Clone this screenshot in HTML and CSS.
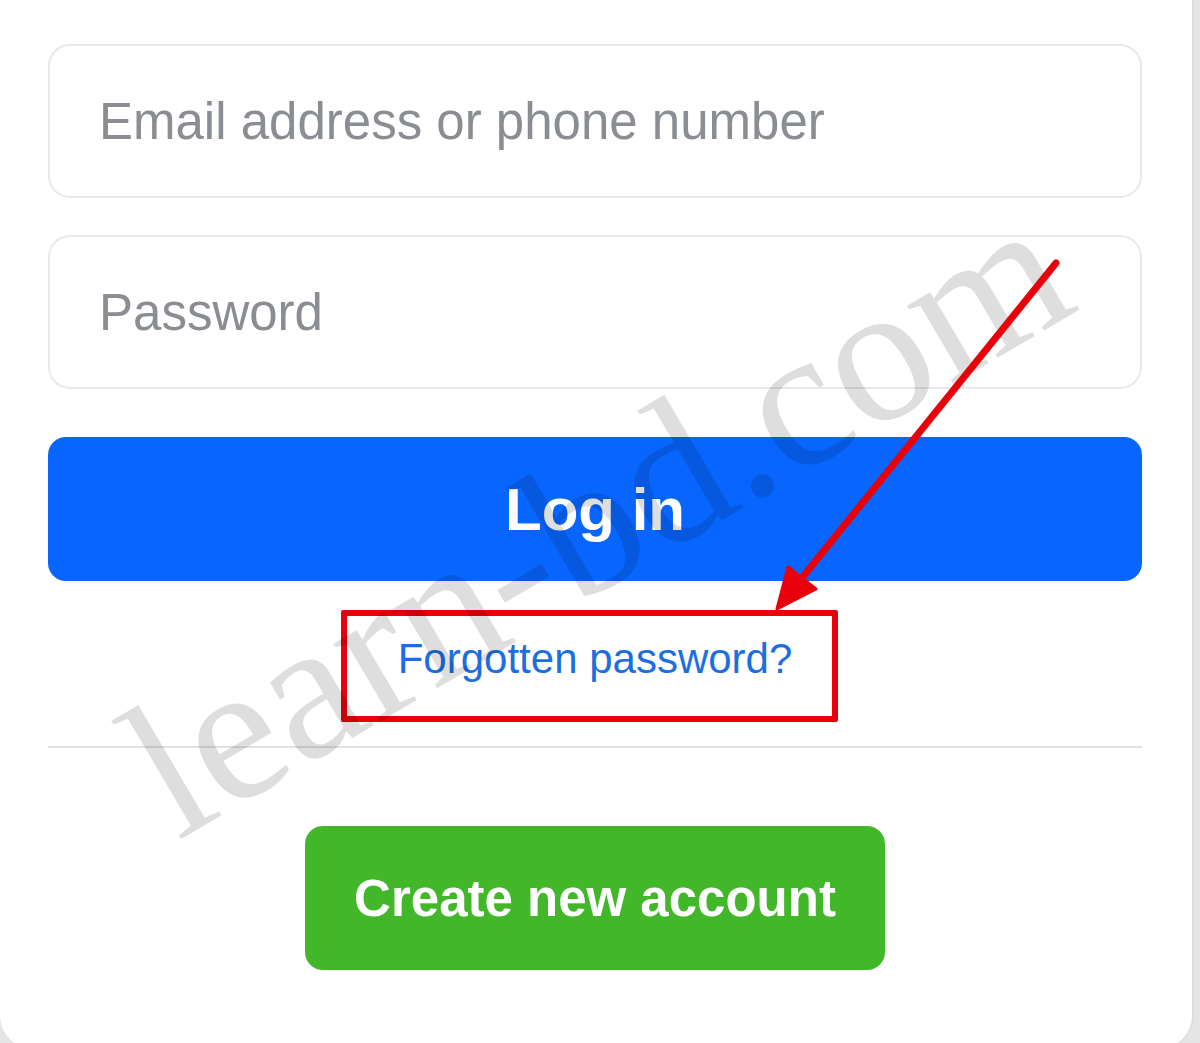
FILE: index.html
```html
<!DOCTYPE html>
<html lang="en">
<head>
<meta charset="utf-8">
<title>Log in</title>
<link rel="stylesheet" href="styles.css">
</head>
<body>
  <main class="card">
    <form class="login-form">
      <input class="field" type="text" placeholder="Email address or phone number">
      <input class="field field-password" type="password" placeholder="Password">
      <button class="btn-login" type="button">Log in</button>
      <div class="forgot-row">
        <span class="highlight-box"><a class="forgot-link" href="#">Forgotten password?</a></span>
      </div>
      <div class="divider"></div>
      <div class="create-row">
        <button class="btn-create" type="button">Create new account</button>
      </div>
    </form>
  </main>

  <div class="watermark">learn-bd.com</div>

  <svg class="annotation" width="1200" height="1043" viewBox="0 0 1200 1043" aria-hidden="true">
    <line x1="1056" y1="263" x2="797" y2="584" stroke="#e8000b" stroke-width="7" stroke-linecap="round"/>
    <polygon points="777,609 788,567 816,589" fill="#e8000b" stroke="#e8000b" stroke-width="3" stroke-linejoin="round"/>
  </svg>
</body>
</html>
```

FILE: styles.css
```css
html, body {
  margin: 0;
  padding: 0;
}

body {
  width: 1200px;
  height: 1043px;
  overflow: hidden;
  background: #e5e5e6;
  font-family: "Liberation Sans", Arial, sans-serif;
  position: relative;
}

.card {
  width: 1192px;
  height: 1088px;
  margin-top: -40px;
  box-sizing: border-box;
  padding: 84px 50px 0 48px;
  background: #ffffff;
  border-radius: 0 0 32px 32px;
  box-shadow: 1px 0 3px rgba(0, 0, 0, 0.06);
}

.login-form {
  display: flex;
  flex-direction: column;
}

.field {
  display: block;
  width: 100%;
  height: 154px;
  box-sizing: border-box;
  margin: 0;
  padding: 0 0 0 49px;
  border: 2px solid #e6e8eb;
  border-radius: 22px;
  background: #ffffff;
  font-family: "Liberation Sans", Arial, sans-serif;
  font-size: 51px;
  color: #1c1e21;
  outline: none;
}

.field::placeholder {
  color: #8a8d91;
  opacity: 1;
}

.field-password {
  margin-top: 37px;
}

.btn-login {
  margin-top: 48px;
  width: 100%;
  height: 144px;
  border: 0;
  border-radius: 18px;
  background: #0866ff;
  color: #ffffff;
  font-family: "Liberation Sans", Arial, sans-serif;
  font-weight: 700;
  font-size: 60px;
  padding: 0;
  cursor: pointer;
}

.forgot-row {
  margin-top: 29px;
  display: flex;
  justify-content: center;
}

.highlight-box {
  display: inline-block;
  box-sizing: border-box;
  height: 112px;
  padding: 19px 40px 0 51px;
  margin-right: 11px;
  border: 6px solid #e8000b;
  border-radius: 2px;
}

.forgot-link {
  font-size: 42px;
  line-height: 48px;
  color: #1d6fe0;
  text-decoration: none;
}

.divider {
  margin-top: 24px;
  height: 2px;
  background: #e0e2e5;
}

.create-row {
  margin-top: 78px;
  display: flex;
  justify-content: center;
}

.btn-create {
  width: 580px;
  height: 144px;
  border: 0;
  border-radius: 18px;
  background: #42b72a;
  color: #ffffff;
  font-family: "Liberation Sans", Arial, sans-serif;
  font-weight: 700;
  font-size: 51px;
  padding: 0;
  cursor: pointer;
}

.watermark {
  position: absolute;
  left: 178px;
  top: 676px;
  font-family: "Liberation Serif", "Times New Roman", serif;
  font-size: 198px;
  line-height: 1;
  white-space: nowrap;
  color: rgba(0, 0, 0, 0.13);
  transform-origin: 0 166px;
  transform: rotate(-30.5deg);
  pointer-events: none;
}

.annotation {
  position: absolute;
  left: 0;
  top: 0;
  pointer-events: none;
}
```
